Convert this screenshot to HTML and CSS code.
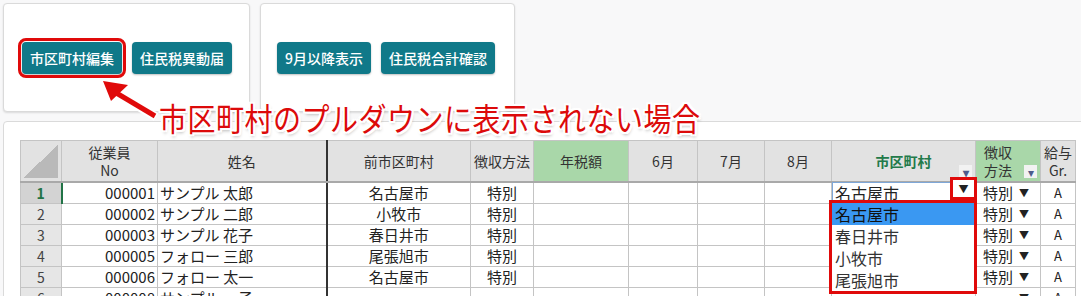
FILE: index.html
```html
<!DOCTYPE html>
<html lang="ja">
<head>
    <meta charset="UTF-8">
    <title>住民税 市区町村編集</title>
    <link rel="stylesheet" href="styles.css">
</head>
<body>
    <div class="toolbar">
        <div class="card card-a">
            <button class="btn btn-marked">市区町村編集</button>
            <button class="btn">住民税異動届</button>
        </div>
        <div class="card card-b">
            <button class="btn">9月以降表示</button>
            <button class="btn">住民税合計確認</button>
        </div>
    </div>

    <div class="sheet-card">
        <table class="sheet">
            <colgroup>
                <col style="width:41px"><col style="width:96px"><col style="width:169px"><col style="width:144px">
                <col style="width:63px"><col style="width:95px"><col style="width:69px"><col style="width:67px">
                <col style="width:67px"><col style="width:144px"><col style="width:65px"><col style="width:35px">
            </colgroup>
            <thead>
                <tr>
                    <th class="corner"><div class="corner-tri"></div></th>
                    <th>従業員<br>No</th>
                    <th class="thick">姓名</th>
                    <th>前市区町村</th>
                    <th>徴収方法</th>
                    <th class="green">年税額</th>
                    <th>6月</th>
                    <th>7月</th>
                    <th>8月</th>
                    <th class="city-head">市区町村<span class="filter">&#9662;</span></th>
                    <th class="green two">徴収<br>方法<span class="filter">&#9662;</span></th>
                    <th class="two">給与<br>Gr.</th>
                </tr>
            </thead>
            <tbody>
                <tr>
                    <td class="rh rh-on">1</td><td class="num">000001</td><td class="thick name">サンプル 太郎</td>
                    <td class="c">名古屋市</td><td class="c">特別</td><td></td><td></td><td></td><td></td>
                    <td class="sel">名古屋市</td><td class="pick">特別<span class="tri">&#9660;</span></td><td class="gr">A</td>
                </tr>
                <tr>
                    <td class="rh">2</td><td class="num">000002</td><td class="thick name">サンプル 二郎</td>
                    <td class="c">小牧市</td><td class="c">特別</td><td></td><td></td><td></td><td></td>
                    <td></td><td class="pick">特別<span class="tri">&#9660;</span></td><td class="gr">A</td>
                </tr>
                <tr>
                    <td class="rh">3</td><td class="num">000003</td><td class="thick name">サンプル 花子</td>
                    <td class="c">春日井市</td><td class="c">特別</td><td></td><td></td><td></td><td></td>
                    <td></td><td class="pick">特別<span class="tri">&#9660;</span></td><td class="gr">A</td>
                </tr>
                <tr>
                    <td class="rh">4</td><td class="num">000005</td><td class="thick name">フォロー 三郎</td>
                    <td class="c">尾張旭市</td><td class="c">特別</td><td></td><td></td><td></td><td></td>
                    <td></td><td class="pick">特別<span class="tri">&#9660;</span></td><td class="gr">A</td>
                </tr>
                <tr>
                    <td class="rh">5</td><td class="num">000006</td><td class="thick name">フォロー 太一</td>
                    <td class="c">名古屋市</td><td class="c">特別</td><td></td><td></td><td></td><td></td>
                    <td></td><td class="pick">特別<span class="tri">&#9660;</span></td><td class="gr">A</td>
                </tr>
                <tr>
                    <td class="rh">6</td><td class="num">000008</td><td class="thick name">サンプル 一子</td>
                    <td></td><td></td><td></td><td></td><td></td><td></td>
                    <td></td><td class="pick"><span class="tri">&#9660;</span></td><td class="gr">A</td>
                </tr>
            </tbody>
        </table>

        <!-- dropdown opened on the selected cell -->
        <div class="drop-btn">&#9660;</div>
        <ul class="drop-list">
            <li class="on">名古屋市</li>
            <li>春日井市</li>
            <li>小牧市</li>
            <li>尾張旭市</li>
        </ul>
    </div>

    <svg class="arrow" width="300" height="140" viewBox="0 0 300 140">
        <line x1="156" y1="117" x2="113" y2="91" stroke="#fff" stroke-width="9"/>
        <polygon points="101,79 132,84 110,105" fill="#fff"/>
        <line x1="155" y1="116" x2="113" y2="91" stroke="#e00a0a" stroke-width="5"/>
        <polygon points="103,81 128,85 111,101" fill="#e00a0a"/>
    </svg>
    <div class="callout">市区町村のプルダウンに表示されない場合</div>
</body>
</html>
```

FILE: styles.css
```css
html, body {
    margin: 0;
    height: 296px;
    overflow: hidden;
}
body {
    position: relative;
    background-color: #f8f8f9;
    font-family: "Noto Sans CJK JP", "Noto Sans", sans-serif;
    color: #222;
}
.toolbar {
    display: flex;
    gap: 10px;
    padding: 3px 0 0 3px;
}
.card {
    display: flex;
    align-items: center;
    gap: 10px;
    height: 107px;
    background-color: #fff;
    border: 1px solid #dadada;
    border-radius: 4px;
    box-shadow: 0 1px 2px rgba(0,0,0,0.12);
}
.card-a {
    width: 227px;
    padding-left: 18px;
}
.card-b {
    width: 237px;
    padding-left: 16px;
}
.btn {
    height: 32px;
    padding: 0 8px;
    border: none;
    border-radius: 4px;
    background-color: #107989;
    color: #fff;
    font-family: "Noto Sans CJK JP", sans-serif;
    font-size: 14px;
    font-weight: 500;
    box-shadow: 0 1px 2px rgba(0,0,0,0.25);
}
.btn-marked {
    outline: 3px solid #e00a0a;
    outline-offset: 1px;
}
.sheet-card {
    position: relative;
    margin: 9px 0 0 3px;
    width: 1100px;
    height: 200px;
    padding: 18px 0 0 16px;
    background-color: #fff;
    border: 1px solid #dadada;
    border-radius: 4px;
}
.sheet {
    border-collapse: collapse;
    table-layout: fixed;
    width: 1055px;
    font-size: 15px;
}
.sheet th {
    height: 36px;
    padding: 0;
    background-color: #e2e2e2;
    border: 1px solid #c4c4c4;
    border-bottom: 2px solid #a9a9a9;
    font-weight: normal;
    font-size: 14px;
    line-height: 18px;
    color: #333;
}
.sheet th.green {
    background-color: #a9d7a9;
}
.sheet th.two {
    position: relative;
    font-size: 14px;
    text-align: left;
    padding-left: 8px;
}
.sheet th.two:last-child {
    text-align: center;
    padding-left: 0;
}
.sheet th.city-head {
    position: relative;
    color: #237a4a;
    font-weight: bold;
}
.filter {
    position: absolute;
    right: 3px;
    bottom: 3px;
    width: 13px;
    height: 13px;
    line-height: 13px;
    font-size: 12px;
    text-align: center;
    color: #4d5b8c;
    background-color: #f2f2f2;
}
.sheet th.corner {
    background-color: #e2e2e2;
    padding: 2px 3px 2px 2px;
}
.corner-tri {
    height: 33px;
    background: linear-gradient(to bottom right, transparent 50%, #b9b9b9 50%);
}
.sheet td {
    height: 20px;
    padding: 0 3px;
    border: 1px solid #c4c4c4;
    line-height: 20px;
    white-space: nowrap;
    overflow: hidden;
}
.sheet .thick {
    border-right: 2px solid #333;
}
.sheet td.rh {
    background-color: #e6e6e6;
    text-align: center;
    font-size: 14px;
    color: #444;
}
.sheet td.rh-on {
    background-color: #d3d3d3;
    color: #217346;
    font-weight: bold;
    border-right: 2px solid #217346;
}
.sheet td.num {
    text-align: right;
    padding-right: 2px;
}
.sheet td.name {
    padding-left: 2px;
}
.sheet td.c {
    text-align: center;
}
.sheet td.sel {
    font-size: 16px;
    padding-left: 3px;
    outline: 1px solid #7ea7d8;
    outline-offset: -1px;
}
.sheet td.pick {
    padding-left: 7px;
}
.tri {
    float: right;
    margin-right: 8px;
    font-size: 10px;
}
.sheet td.gr {
    text-align: center;
    font-size: 13px;
}
.drop-btn {
    position: absolute;
    left: 946px;
    top: 55px;
    width: 27px;
    height: 23px;
    box-sizing: border-box;
    border: 3px solid #e00a0a;
    background-color: #fff;
    font-size: 10px;
    line-height: 17px;
    text-align: center;
}
.drop-list {
    position: absolute;
    left: 825px;
    top: 78px;
    width: 148px;
    height: 94px;
    box-sizing: border-box;
    margin: 0;
    padding: 0;
    list-style: none;
    border: 3px solid #e00a0a;
    background-color: #fff;
}
.drop-list li {
    height: 22px;
    line-height: 22px;
    padding-left: 3px;
    font-size: 16px;
    color: #333;
}
.drop-list li.on {
    background-color: #3a98f2;
    color: #111;
}
.arrow {
    position: absolute;
    left: 0;
    top: 0;
}
.callout {
    position: absolute;
    left: 159px;
    top: 101px;
    font-size: 28px;
    line-height: 1;
    letter-spacing: 0.5px;
    white-space: nowrap;
    color: #dc0a0a;
    transform: scaleY(1.15);
    transform-origin: top left;
    text-shadow: 2px 0 0 #fff, -2px 0 0 #fff, 0 2px 0 #fff, 0 -2px 0 #fff,
        2px 2px 0 #fff, -2px -2px 0 #fff, 2px -2px 0 #fff, -2px 2px 0 #fff,
        1px 3px 3px rgba(0,0,0,0.3);
}
```
